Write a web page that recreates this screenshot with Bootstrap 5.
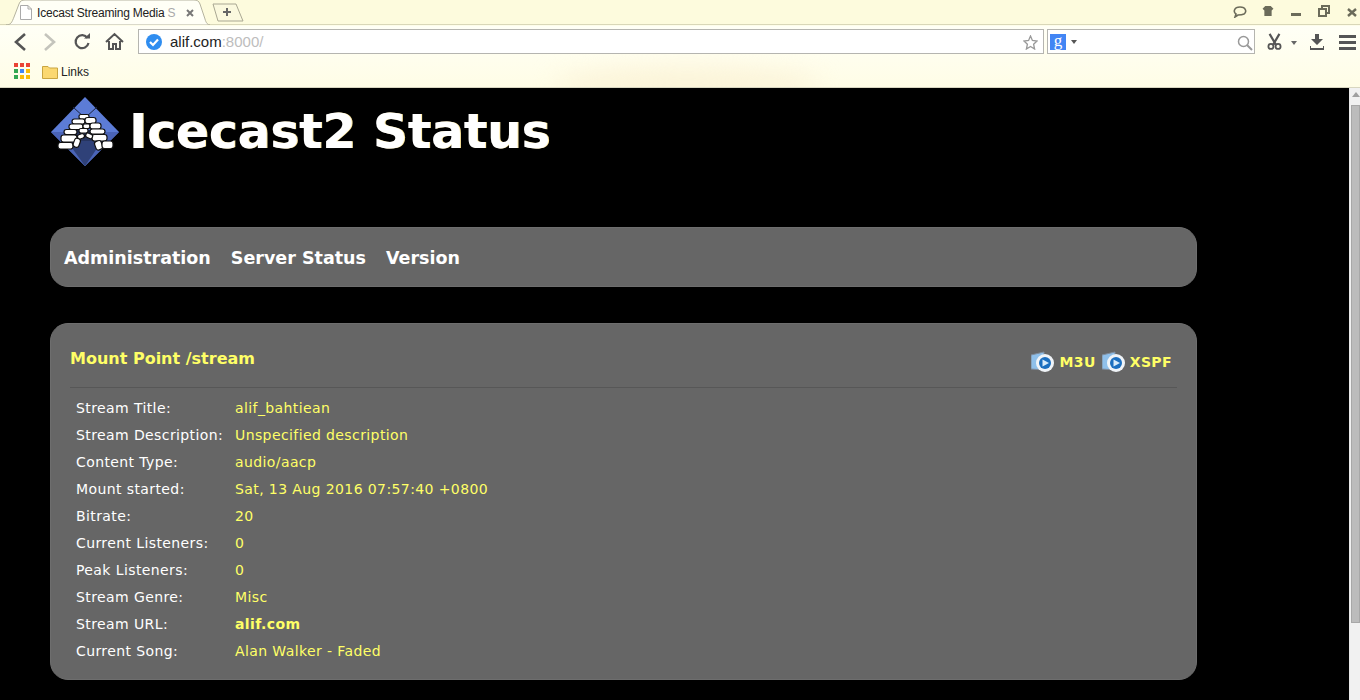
<!DOCTYPE html>
<html lang="en"><head><meta charset="utf-8"><title>Icecast Streaming Media Server</title>
<link href="https://cdn.jsdelivr.net/npm/bootstrap@5.3.0/dist/css/bootstrap.min.css" rel="stylesheet">
<script src="https://cdn.jsdelivr.net/npm/bootstrap@5.3.0/dist/js/bootstrap.bundle.min.js"></script>
<style>
html,body{height:700px;overflow:hidden;background:#000}
body{font-family:"DejaVu Sans",Verdana,sans-serif}
.chrome-top{height:88px;background:linear-gradient(#fdfbdd 0,#fdfbdd 25px,#fffff6 26px,#fffde6 88px);border-bottom:1px solid #d8d6c0;font-family:"Liberation Sans",Arial,sans-serif;position:relative;overflow:hidden}
.glow{position:absolute;left:555px;top:68px;width:265px;height:36px;border-radius:50%;background:#fbf3d8;filter:blur(12px)}
.tabstrip{height:25px;border-bottom:1px solid #d9d7b8;position:relative}
.tabshape{position:absolute;left:6px;top:0;width:204px;height:25px}
.tabtext{position:absolute;left:37px;top:6px;font-size:12px;line-height:14px;white-space:nowrap;color:#222;letter-spacing:-.2px}
.tabtext span{color:#aaa}
.tabx{position:absolute;left:186px;top:9px}
.newtab{position:absolute;left:212px;top:3px}
.winicon{position:absolute;top:0}
.toolrow{height:34px;position:relative}
.tool{position:absolute;top:5px}
.addr{position:absolute;left:138px;top:4px;width:906px;height:25px;background:#fff;border:1px solid #b5b5b0;font-size:15px;line-height:24px;padding-left:31px;color:#222}
.addr span{color:#bdbdbd}
.srch{position:absolute;left:1047px;top:4px;width:208px;height:25px;background:#fff;border:1px solid #b5b5b0}
.gbox{position:absolute;left:2px;top:4px;width:16px;height:16px;background:#4285f4;color:#fff;font:17px/13px "Liberation Serif",serif;text-align:center}
.bookrow{height:28px;position:relative}
.linktext{position:absolute;left:61px;top:6px;font-size:12px;line-height:14px;color:#222}
.pagebody{height:612px;overflow:hidden;position:relative}
.sbar{position:absolute;right:0;top:0;width:11px;height:612px;background:#f1f1f1;border-left:1px solid #e8e8e8}
.sthumb{position:absolute;left:1px;right:0;top:17px;height:518px;background:#bcbcbc;border:1px solid #a8a8a8}
.sarrow{position:absolute;left:2px;top:4px;width:0;height:0;border-left:4px solid transparent;border-right:4px solid transparent;border-bottom:5px solid #a0a0a0}
.wrapbox{width:1147px;margin-left:50px}
.headrow{height:139px;padding-top:9px}
.headtitle{font-size:48.5px;font-weight:700;line-height:64px;color:#fff;margin:0 0 0 10px;padding-top:2px;text-shadow:1px 0 0 #ffe9a0}
.panelbar{background:#666;border-radius:18px;border:1px solid #6e6e6e}
.menubox{height:60px;padding:2px 13px 0;gap:20px;font-size:17.5px;font-weight:700;color:#fff;margin-bottom:36px}
.mountbox{height:357px;padding:0 19px}
.mounthead{height:64px;border-bottom:1px solid #575757;padding:0 5px 0 0}
.mounttitle{font-size:16px;font-weight:700;color:#ff6;margin-top:25px;line-height:20px}
.playlists{font-size:14px;letter-spacing:.4px;font-weight:700;color:#ff6;margin-top:26px;gap:6px}
.pl{gap:5px;line-height:24px}
.stats{padding:7px 0 0 6px;font-size:14px;letter-spacing:.4px;color:#fff}
.statrow{height:27px;line-height:27px}
.statkey{width:159px}
.statval{color:#ff6}
</style></head>
<body>
<header class="chrome-top">
 <div class="glow"></div>
 <div class="tabstrip">
  <svg class="tabshape" viewBox="0 0 204 25"><path d="M0 25 C5 25 6 22 8 17 L13 4 C14 1 16 0 19 0 H188 C191 0 193 1 194 4 L199 19 C200 23 202 25 204 25 Z" fill="#fffff6" stroke="#b5b39f"/></svg>
  <svg class="position-absolute" style="left:20px;top:5px" width="12" height="15" viewBox="0 0 12 15"><path d="M.5.5H8L11.5 4V14.5H.5Z M8 .5V4H11.5" fill="#fff" stroke="#aaa"/></svg>
  <div class="tabtext">Icecast Streaming Media <span>S</span></div>
  <svg class="tabx" width="8" height="8" viewBox="0 0 8 8"><path d="M1 1L7 7M7 1L1 7" stroke="#777" stroke-width="2"/></svg>
  <svg class="newtab" width="32" height="19" viewBox="0 0 32 19"><path d="M1 1H24L31 18H6Z" fill="#fbf9de" stroke="#a9a792"/><path d="M15 5V13M11 9H19" stroke="#666" stroke-width="2"/></svg>
  <svg class="winicon" style="left:1233px;top:6px" width="14" height="12" viewBox="0 0 14 12"><path d="M3 8C0 6 1 1 7 1S14 6 11 8C9 9 6 9 5 9L2 11Z" fill="none" stroke="#6b6b5a" stroke-width="1.6"/></svg>
  <svg class="winicon" style="left:1262px;top:6px" width="12" height="10" viewBox="0 0 12 11"><path d="M3 0H9L12 3 10 5V11H2V5L0 3Z" fill="#6b6b5a"/></svg>
  <svg class="winicon" style="left:1291px;top:13px" width="10" height="3"><rect width="10" height="3" fill="#6b6b5a"/></svg>
  <svg class="winicon" style="left:1318px;top:5px" width="12" height="12" viewBox="0 0 12 12"><path d="M4 3V1H11V8H9M1 4H8V11H1Z" fill="none" stroke="#6b6b5a" stroke-width="2"/></svg>
  <svg class="winicon" style="left:1347px;top:8px" width="10" height="9" viewBox="0 0 10 9"><path d="M1 1L9 8M9 1L1 8" stroke="#6b6b5a" stroke-width="2.4"/></svg>
 </div>
 <div class="toolrow">
  <svg class="tool" style="left:12px" width="16" height="24" viewBox="0 0 16 24"><path d="M13 4L4 12L13 20" fill="none" stroke="#555" stroke-width="2.6"/></svg>
  <svg class="tool" style="left:42px" width="16" height="24" viewBox="0 0 16 24"><path d="M3 4L12 12L3 20" fill="none" stroke="#c4c4bc" stroke-width="2.6"/></svg>
  <svg class="tool" style="left:73px" width="18" height="24" viewBox="0 0 18 24"><path d="M14.5 8A6.5 6.5 0 1 0 15.500 13" fill="none" stroke="#555" stroke-width="2.2"/><path d="M11 8.500H17V3Z" fill="#555"/></svg>
  <svg class="tool" style="left:105px" width="19" height="24" viewBox="0 0 19 24"><path d="M1 12L9.500 4L18 12M4 11V19H8V14H11V19H15V11" fill="none" stroke="#555" stroke-width="2"/></svg>
  <div class="addr">alif.com<span>:8000/</span>
   <svg class="position-absolute" style="left:7px;top:4px" width="16" height="16" viewBox="0 0 16 16"><circle cx="8" cy="8" r="8" fill="#2f8df0"/><path d="M4 8L7 11L12 5.500" fill="none" stroke="#fff" stroke-width="2.200"/></svg>
   <svg class="position-absolute" style="left:884px;top:5px" width="15" height="15" viewBox="0 0 15 15"><path d="M7.500 1L9.400 5.500 14 6 10.600 9.200 11.600 14 7.500 11.500 3.400 14 4.400 9.200 1 6 5.600 5.500Z" fill="none" stroke="#999" stroke-width="1.300"/></svg>
  </div>
  <div class="srch"><div class="gbox">g</div>
   <svg class="position-absolute" style="left:23px;top:10px" width="6" height="4"><path d="M0 0H6L3 4Z" fill="#555"/></svg>
   <svg class="position-absolute" style="left:189px;top:5px" width="16" height="16" viewBox="0 0 16 16"><circle cx="6.500" cy="6.500" r="5" fill="none" stroke="#999" stroke-width="1.500"/><path d="M10 10L15 15" stroke="#999" stroke-width="2"/></svg>
  </div>
  <svg class="tool" style="left:1266px;top:8px" width="17" height="17" viewBox="0 0 17 19"><path d="M3 1L10 13M14 1L7 13" stroke="#555" stroke-width="2.400"/><circle cx="4.500" cy="15" r="2.800" fill="none" stroke="#555" stroke-width="2"/><circle cx="12.500" cy="15" r="2.800" fill="none" stroke="#555" stroke-width="2"/></svg>
  <svg class="tool" style="left:1291px;top:16px" width="6" height="4"><path d="M0 0H6L3 4Z" fill="#666"/></svg>
  <svg class="tool" style="left:1310px;top:9px" width="14" height="16" viewBox="0 0 14 16"><path d="M5 0H9V5H13L7 11L1 5H5Z" fill="#555"/><path d="M0 12V15H14V12" fill="none" stroke="#555" stroke-width="2"/></svg>
  <svg class="tool" style="left:1339px;top:10px" width="17" height="15"><path d="M0 0H17V3H0ZM0 6H17V9H0ZM0 12H17V15H0Z" fill="#555"/></svg>
 </div>
 <div class="bookrow">
  <svg class="position-absolute" style="left:14px;top:4px" width="16" height="16"><g fill="#ea4335"><rect width="4" height="4"/><rect x="6" width="4" height="4"/><rect x="12" width="4" height="4"/></g><rect y="6" width="4" height="4" fill="#34a853"/><rect x="6" y="6" width="4" height="4" fill="#4285f4"/><rect x="12" y="6" width="4" height="4" fill="#fbbc05"/><rect y="12" width="4" height="4" fill="#34a853"/><rect x="6" y="12" width="4" height="4" fill="#fbbc05"/><rect x="12" y="12" width="4" height="4" fill="#fbbc05"/></svg>
  <svg class="position-absolute" style="left:42px;top:6px" width="16" height="14" viewBox="0 0 16 14"><path d="M.5 13.500V1.500H6L7.500 3H15.500V13.500Z" fill="#fbd871" stroke="#c9a540"/></svg>
  <div class="linktext">Links</div>
 </div>
</header>
<main class="pagebody">
 <div class="sbar"><div class="sarrow"></div><div class="sthumb"></div></div>
 <div class="wrapbox">
  <div class="headrow d-flex">
   <svg width="69" height="69" viewBox="0 0 69 69" class="flex-shrink-0">
    <path d="M35 0L69 35 35 69 1 35Z" fill="#5c7cd6"/>
    <path d="M1 35L35 69 69 35 60 35 H10Z" fill="#4a64b8"/>
    <path d="M17 44H52L35 69Z" fill="#2f4178"/>
    <path d="M25 33H45L50 44H20Z" fill="#26345f"/>
    <path d="M23 10L35 21M47 10L35 21" stroke="#1a2340" stroke-width="1" fill="none"/>
    <g fill="#fff" stroke="#111" stroke-width="1.200">
     <rect x="29" y="17.500" width="10" height="4.500" rx="2"/>
     <rect x="22" y="22" width="13" height="5" rx="2.500"/><rect x="35" y="20.500" width="11" height="6" rx="2.500"/>
     <rect x="19" y="27" width="14" height="5.500" rx="2.500"/><rect x="33" y="27" width="7" height="4.500" rx="2"/><rect x="40" y="26" width="11" height="6" rx="2.500"/>
     <rect x="14" y="32.500" width="13" height="5" rx="2.500"/><rect x="29" y="31.500" width="9" height="4.500" rx="2"/><rect x="40" y="32" width="15" height="5" rx="2.500"/>
     <rect x="11" y="38" width="16" height="7" rx="2.500"/><rect x="42" y="37.500" width="15" height="6.500" rx="2.500"/>
     <rect x="27" y="37" width="7" height="4.500" rx="2" transform="rotate(-20 31 38)"/><rect x="36" y="36.500" width="7" height="4.500" rx="2" transform="rotate(25 39 38)"/>
     <rect x="8" y="45.500" width="15" height="6.500" rx="2.500"/><rect x="24" y="41" width="6" height="9" rx="2.500" transform="rotate(20 26 45)"/>
     <rect x="45" y="44" width="7" height="9" rx="2.500" transform="rotate(-20 48 48)"/><rect x="52" y="44" width="11" height="7.500" rx="2.500"/>
    </g>
   </svg>
   <h1 class="headtitle">Icecast2 Status</h1>
  </div>
  <nav class="panelbar menubox d-flex align-items-center"><span>Administration</span><span>Server Status</span><span>Version</span></nav>
  <section class="panelbar mountbox">
   <div class="mounthead d-flex justify-content-between align-items-start">
    <div class="mounttitle">Mount Point /stream</div>
    <div class="playlists d-flex">
     <div class="pl d-flex align-items-center"><svg width="23" height="23" viewBox="0 0 23 23"><path d="M0 4L13 1V19L0 18Z" fill="#8fc0ea" stroke="#7f8c9c"/><circle cx="14" cy="12" r="9" fill="#f0f4f8"/><circle cx="14" cy="12" r="6" fill="#1b6fc0"/><path d="M11.500 8.500L18 12 11.500 15.500Z" fill="#d8ecfb"/></svg>M3U</div>
     <div class="pl d-flex align-items-center"><svg width="23" height="23" viewBox="0 0 23 23"><path d="M0 4L13 1V19L0 18Z" fill="#8fc0ea" stroke="#7f8c9c"/><circle cx="14" cy="12" r="9" fill="#f0f4f8"/><circle cx="14" cy="12" r="6" fill="#1b6fc0"/><path d="M11.500 8.500L18 12 11.500 15.500Z" fill="#d8ecfb"/></svg>XSPF</div>
    </div>
   </div>
   <div class="stats">
    <div class="statrow d-flex"><div class="statkey">Stream Title:</div><div class="statval">alif_bahtiean</div></div>
    <div class="statrow d-flex"><div class="statkey">Stream Description:</div><div class="statval">Unspecified description</div></div>
    <div class="statrow d-flex"><div class="statkey">Content Type:</div><div class="statval">audio/aacp</div></div>
    <div class="statrow d-flex"><div class="statkey">Mount started:</div><div class="statval">Sat, 13 Aug 2016 07:57:40 +0800</div></div>
    <div class="statrow d-flex"><div class="statkey">Bitrate:</div><div class="statval">20</div></div>
    <div class="statrow d-flex"><div class="statkey">Current Listeners:</div><div class="statval">0</div></div>
    <div class="statrow d-flex"><div class="statkey">Peak Listeners:</div><div class="statval">0</div></div>
    <div class="statrow d-flex"><div class="statkey">Stream Genre:</div><div class="statval">Misc</div></div>
    <div class="statrow d-flex"><div class="statkey">Stream URL:</div><div class="statval fw-bold">alif.com</div></div>
    <div class="statrow d-flex"><div class="statkey">Current Song:</div><div class="statval">Alan Walker - Faded</div></div>
   </div>
  </section>
 </div>
</main>
</body></html>
